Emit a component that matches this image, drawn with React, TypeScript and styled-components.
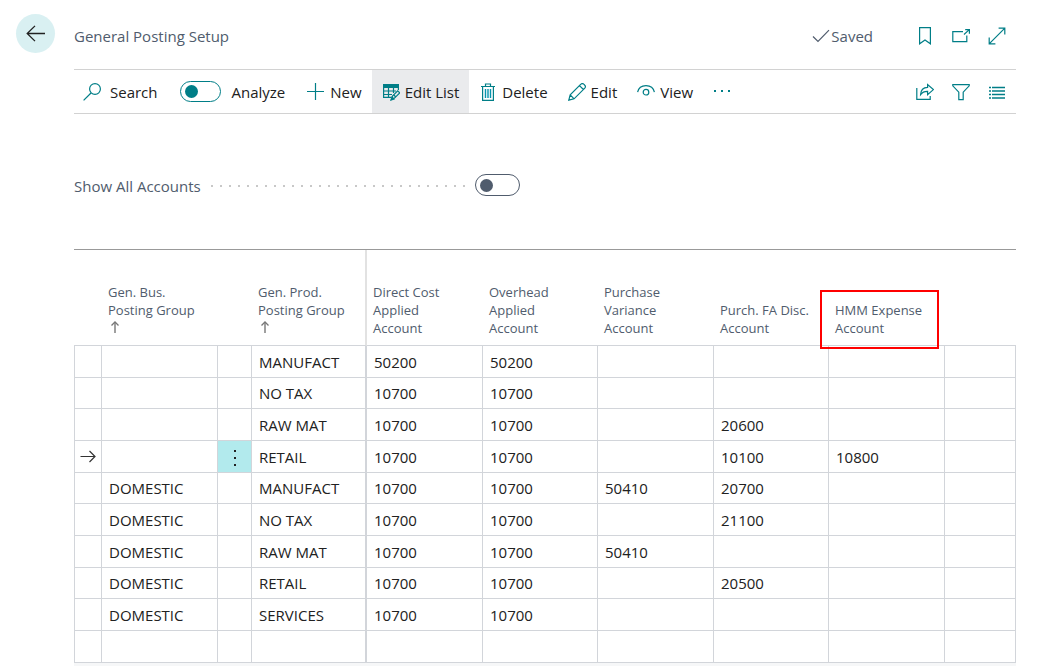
import React from "react";
import styled, { createGlobalStyle, css } from "styled-components";

const teal = "#007e87";
const slate = "#505c6d";
const ink = "#212121";
const line = "#d2d5da";

const GlobalStyle = createGlobalStyle`
  * { box-sizing: border-box; }
  body {
    margin: 0;
    background: #fff;
    color: ${ink};
    font-family: "Segoe UI", "Open Sans", "Noto Sans", sans-serif;
    font-size: 15px;
    line-height: 20px;
  }
  button, input {
    font: inherit;
    color: inherit;
    margin: 0;
  }
`;

const Page = styled.div`
  display: grid;
  grid-template-columns: 58px minmax(0, 1fr);
  padding: 0 25px 0 16px;
`;

const Rail = styled.div`
  padding-top: 14px;
`;

const BackButton = styled.button`
  display: flex;
  align-items: center;
  justify-content: center;
  width: 39px;
  height: 39px;
  padding: 0;
  border: 0;
  border-radius: 50%;
  background: #d9f0f2;
`;

const Main = styled.main`
  min-width: 0;
`;

const PageHeader = styled.header`
  display: flex;
  align-items: center;
  justify-content: space-between;
  height: 69px;
  padding: 2px 9px 0 0;
  color: ${slate};
`;

const Title = styled.h1`
  margin: 0;
  font-size: 15px;
  font-weight: 400;
`;

const HeaderActions = styled.div`
  display: flex;
  align-items: center;
`;

const Saved = styled.span`
  display: flex;
  align-items: center;
  gap: 1px;
  margin-right: 42px;
`;

const IconGroup = styled.div`
  display: flex;
  align-items: center;
  gap: 16px;
`;

const IconButton = styled.button`
  display: flex;
  align-items: center;
  justify-content: center;
  width: 20px;
  height: 20px;
  padding: 0;
  border: 0;
  background: none;
`;

const Toolbar = styled.div`
  display: flex;
  align-items: stretch;
  justify-content: space-between;
  height: 45px;
  padding-right: 9px;
  border-top: 1px solid #d2d2d2;
  border-bottom: 1px solid #d2d2d2;
`;

const Commands = styled.div`
  display: flex;
  align-items: stretch;
  margin-left: -1px;
`;

const Command = styled.button<{ $active?: boolean; $gap?: number }>`
  display: flex;
  align-items: center;
  gap: ${(p) => p.$gap ?? 5}px;
  padding: 0 10px;
  border: 0;
  white-space: nowrap;
  background: ${(p) => (p.$active ? "#eaebed" : "transparent")};
`;

const AnalyzeLabel = styled.label`
  display: flex;
  align-items: center;
  gap: 11px;
  padding: 0 12px;
`;

const Switch = styled.input<{ $tone: string; $width: number; $height: number }>`
  appearance: none;
  display: flex;
  flex: none;
  align-items: center;
  width: ${(p) => p.$width}px;
  height: ${(p) => p.$height}px;
  padding-left: 4px;
  border: 1px solid ${(p) => p.$tone};
  border-radius: 11px;
  background: #fff;

  &::before {
    content: "";
    width: 13px;
    height: 13px;
    border-radius: 50%;
    background: ${(p) => p.$tone};
  }
  &:checked {
    justify-content: flex-end;
    padding: 0 4px 0 0;
  }
`;

const Field = styled.label`
  display: flex;
  align-items: center;
  width: 446px;
  margin: 60px 0 53px;
  color: ${slate};
`;

const FieldCaption = styled.span`
  display: flex;
  flex: 1;
  align-items: center;
  padding-top: 2px;
`;

const Leader = styled.span`
  flex: 1;
  height: 2px;
  margin: 0 8px 0 10px;
  background: radial-gradient(circle at 1px 1px, #c8c8c8 1px, transparent 1px) 0 0 / 9px 2px repeat-x;
`;

const TableFrame = styled.div`
  border-top: 1px solid #999;
  border-bottom: 3px solid #f6f7f8;
`;

const Table = styled.table`
  width: 100%;
  table-layout: fixed;
  border-collapse: separate;
  border-spacing: 0;
`;

const Col = styled.col<{ $width?: number }>`
  width: ${(p) => (p.$width ? `${p.$width}px` : "auto")};
`;

const HeadCell = styled.th<{ $frozen?: boolean }>`
  position: relative;
  height: 96px;
  padding: 0 0 8px 6px;
  border-bottom: 1px solid ${line};
  ${(p) => p.$frozen && css`border-right: 2px solid #e2e2e2;`}
  color: ${slate};
  font-size: 13px;
  font-weight: 400;
  line-height: 18px;
  text-align: left;
  vertical-align: bottom;
  white-space: pre-line;
`;

const SortMark = styled.svg`
  display: block;
  width: 14px;
  height: 18px;
`;

const Callout = styled.span`
  position: absolute;
  top: 40px;
  left: -9px;
  width: 119px;
  height: 59px;
  border: 2px solid #f00;
  pointer-events: none;
`;

const Row = styled.tr`
  height: 32px;
  &:nth-child(3n + 2) {
    height: 31px;
  }
`;

const Cell = styled.td<{ $frozen?: boolean; $menu?: boolean }>`
  padding: 0 0 0 7px;
  border-right: ${(p) => (p.$frozen ? 2 : 1)}px solid ${line};
  border-bottom: 1px solid ${line};
  white-space: nowrap;
  &:first-child {
    padding: 0;
    border-left: 1px solid ${line};
  }
  ${(p) => p.$menu && css`
    padding: 0;
    background: #b2eaed;
  `}
`;

const RowMenu = styled.button`
  display: flex;
  align-items: center;
  justify-content: center;
  width: 100%;
  height: 20px;
  padding: 0;
  border: 0;
  background: none;
`;

const RowMarker = styled.svg`
  display: block;
  margin: 0 auto;
`;

const Glyph = ({ children }: { children: React.ReactNode }) => (
  <svg width="18" height="18" viewBox="0 0 18 18" fill="none" stroke={teal} strokeWidth="1.2" aria-hidden="true">
    {children}
  </svg>
);

const SearchIcon = () => (
  <Glyph><circle cx="12" cy="6" r="5.4" /><path d="M8 10 .6 17.4" /></Glyph>
);
const PlusIcon = () => (
  <Glyph><path d="M8.5 0v17M0 8.5h17" /></Glyph>
);
const EditListIcon = () => (
  <Glyph>
    <path d="M1 1h16v4H1z" fill={teal} stroke="none" />
    <path d="M1.6 4v10.4H9M6.5 4v10.4M11.5 4v6M16.4 4v3M1 8h13M1 11.5h9" />
    <path d="m9.5 16.5 1-3.4 5.2-5.2 2 2-5.2 5.2z" fill="#eaebed" />
    <path d="m9 17 1-3 2 2zM11.8 12l2 2" fill={teal} />
  </Glyph>
);
const TrashIcon = () => (
  <Glyph>
    <path d="M2 3.5h14M6.5 3V1h5v2M3.6 3.5v13.9h10.8V3.5" />
    <path d="M6.5 6v9M9 6v9M11.5 6v9" stroke="#0794ad" strokeWidth="1.4" />
  </Glyph>
);
const PencilIcon = () => (
  <Glyph>
    <path d="m.8 17.2 1.4-5.3L12.9 1.2a2 2 0 0 1 2.9 0l1 1a2 2 0 0 1 0 2.9L6.1 15.8zM2.2 11.9l3.9 3.9M11.5 2.6l3.9 3.9" />
  </Glyph>
);
const EyeIcon = () => (
  <Glyph>
    <path d="M.6 9.2C1.4 5.3 4.6 2.6 9 2.6s7.6 2.7 8.4 6.6" /><circle cx="9" cy="9.2" r="2.8" />
  </Glyph>
);
const MoreIcon = () => (
  <Glyph><path d="M1 7h2v2H1zM8 7h2v2H8zM15 7h2v2h-2z" fill={teal} stroke="none" /></Glyph>
);
const BookmarkIcon = () => (
  <Glyph><path d="M3.6.6h10.8v16.2L9 13l-5.4 3.8z" /></Glyph>
);
const PopOutIcon = () => (
  <Glyph><path d="M11 4.6H.8v10h14V8.5M12 7.5l5-4.6M13.2 2.6h4.2v4.2" /></Glyph>
);
const ExpandIcon = () => (
  <Glyph><path d="M1.4 16.6 16.6 1.4M10.6 1.2h6.2v6.2M1.2 10.6v6.2h6.2" /></Glyph>
);
const ShareIcon = () => (
  <Glyph>
    <path d="M.8 5v11.4h13.4V13" />
    <path d="M4.6 11.6C4.8 7.4 7.2 4.6 11.6 4.4V1.6l5.8 5-5.8 5V8.4c-3-.1-5.2.7-7 3.2z" />
  </Glyph>
);
const FilterIcon = () => (
  <Glyph><path d="M.8 1.6h16.4v1.2l-6 6.4v7.4H6.8V9.2l-6-6.4z" /></Glyph>
);
const ListIcon = () => (
  <Glyph>
    <path d="M1 4.5h2M4 4.5h13M1 8h2M4 8h13M1 11.5h2M4 11.5h13M1 15h2M4 15h13" strokeWidth="1.4" />
  </Glyph>
);

const columns: { label: string; width?: number; sorted?: boolean; frozen?: boolean; callout?: boolean }[] = [
  { label: "", width: 28 },
  { label: "Gen. Bus.\nPosting Group", width: 116, sorted: true },
  { label: "", width: 34 },
  { label: "Gen. Prod.\nPosting Group", width: 115, sorted: true, frozen: true },
  { label: "Direct Cost\nApplied\nAccount", width: 116 },
  { label: "Overhead\nApplied\nAccount", width: 115 },
  { label: "Purchase\nVariance\nAccount", width: 116 },
  { label: "Purch. FA Disc.\nAccount", width: 115 },
  { label: "HMM Expense\nAccount", width: 116, callout: true },
  { label: "" },
];

const rows = [
  ["", "MANUFACT", "50200", "50200", "", "", ""],
  ["", "NO TAX", "10700", "10700", "", "", ""],
  ["", "RAW MAT", "10700", "10700", "", "20600", ""],
  ["", "RETAIL", "10700", "10700", "", "10100", "10800"],
  ["DOMESTIC", "MANUFACT", "10700", "10700", "50410", "20700", ""],
  ["DOMESTIC", "NO TAX", "10700", "10700", "", "21100", ""],
  ["DOMESTIC", "RAW MAT", "10700", "10700", "50410", "", ""],
  ["DOMESTIC", "RETAIL", "10700", "10700", "", "20500", ""],
  ["DOMESTIC", "SERVICES", "10700", "10700", "", "", ""],
  ["", "", "", "", "", "", ""],
];

const selectedRow = 3;

export default function App() {
  return (
    <>
      <GlobalStyle />
      <Page>
        <Rail>
          <BackButton aria-label="Back">
            <svg width="20" height="18" viewBox="0 0 20 18" fill="none" stroke={ink} strokeWidth="1.3">
              <path d="M19 8.5H1.5M9 .9 1.2 8.500 9 16.1" />
            </svg>
          </BackButton>
        </Rail>
        <Main>
          <PageHeader>
            <Title>General Posting Setup</Title>
            <HeaderActions>
              <Saved>
                <svg width="18" height="14" viewBox="0 0 18 14" fill="none" stroke={slate} strokeWidth="1.2" aria-hidden="true">
                  <path d="m1 7.500 5 5L17 1.2" />
                </svg>
                Saved
              </Saved>
              <IconGroup>
                <IconButton aria-label="Bookmark"><BookmarkIcon /></IconButton>
                <IconButton aria-label="Open in new window"><PopOutIcon /></IconButton>
                <IconButton aria-label="Expand"><ExpandIcon /></IconButton>
              </IconGroup>
            </HeaderActions>
          </PageHeader>

          <Toolbar>
            <Commands>
              <Command $gap={9}><SearchIcon />Search</Command>
              <AnalyzeLabel>
                <Switch type="checkbox" role="switch" $tone={teal} $width={41} $height={21} />
                Analyze
              </AnalyzeLabel>
              <Command><PlusIcon />New</Command>
              <Command $active><EditListIcon />Edit List</Command>
              <Command><TrashIcon />Delete</Command>
              <Command><PencilIcon />Edit</Command>
              <Command><EyeIcon />View</Command>
              <Command aria-label="More options"><MoreIcon /></Command>
            </Commands>
            <IconGroup>
              <IconButton aria-label="Share"><ShareIcon /></IconButton>
              <IconButton aria-label="Filter"><FilterIcon /></IconButton>
              <IconButton aria-label="List view"><ListIcon /></IconButton>
            </IconGroup>
          </Toolbar>

          <Field>
            <FieldCaption>
              Show All Accounts
              <Leader />
            </FieldCaption>
            <Switch type="checkbox" role="switch" $tone={slate} $width={45} $height={22} />
          </Field>

          <TableFrame>
            <Table>
              <colgroup>
                {columns.map((c, i) => <Col key={i} $width={c.width} />)}
              </colgroup>
              <thead>
                <tr>
                  {columns.map((c, i) => (
                    <HeadCell key={i} scope="col" $frozen={c.frozen}>
                      {c.label}
                      {c.sorted && (
                        <SortMark viewBox="0 0 14 18" fill="none" aria-label="Sorted ascending">
                          <path d="M7 14V4" stroke="#a0a0a0" strokeWidth="2" />
                          <path d="M3.500 6.500 7 3l3.500 3.500" stroke="#777" strokeWidth="1.3" />
                        </SortMark>
                      )}
                      {c.callout && <Callout />}
                    </HeadCell>
                  ))}
                </tr>
              </thead>
              <tbody>
                {rows.map(([bus, prod, ...accounts], i) => (
                  <Row key={i}>
                    <Cell>
                      {i === selectedRow && (
                        <RowMarker width="16" height="14" viewBox="0 0 16 14" fill="none" stroke="#333" strokeWidth="1.2">
                          <path d="M.5 6.500H15M9.500 1 15 6.500 9.500 12" />
                        </RowMarker>
                      )}
                    </Cell>
                    <Cell>{bus}</Cell>
                    <Cell $menu={i === selectedRow}>
                      {i === selectedRow && (
                        <RowMenu aria-label="Row options">
                          <svg width="4" height="18" viewBox="0 0 4 18" fill={ink}>
                            <path d="M1 2h2v2H1zM1 9h2v2H1zM1 16h2v2H1z" />
                          </svg>
                        </RowMenu>
                      )}
                    </Cell>
                    <Cell $frozen>{prod}</Cell>
                    {accounts.map((value, j) => <Cell key={j}>{value}</Cell>)}
                    <Cell />
                  </Row>
                ))}
              </tbody>
            </Table>
          </TableFrame>
        </Main>
      </Page>
    </>
  );
}
